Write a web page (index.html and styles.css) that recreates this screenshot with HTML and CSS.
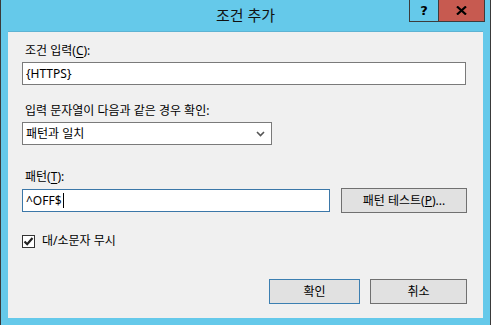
FILE: index.html
```html
<!DOCTYPE html>
<html lang="ko">
<head>
    <meta charset="UTF-8">
    <meta name="viewport" content="width=device-width, initial-scale=1.0">
    <title>조건 추가</title>
    <link rel="stylesheet" href="styles.css">
</head>
<body>
    <div class="window">
        <div class="titlebar">
            <div></div>
            <div class="title">조건 추가</div>
            <div class="caption">
                <div class="cap-btn help">?</div>
                <div class="cap-btn close">
                    <svg width="11" height="9" viewBox="0 0 11 9">
                        <path d="M1 0.5 L10 8.5 M10 0.5 L1 8.5" stroke="#000" stroke-width="2.2" fill="none"/>
                    </svg>
                </div>
            </div>
        </div>
        <div class="content">
            <div class="label label-first">조건 입력(<u>C</u>):</div>
            <div class="field field-wide">{HTTPS}</div>

            <div class="label label-second">입력 문자열이 다음과 같은 경우 확인:</div>
            <div class="field field-select">
                <span>패턴과 일치</span>
                <svg width="9" height="6" viewBox="0 0 9 6">
                    <path d="M1 1 L4.5 4.5 L8 1" stroke="#555" stroke-width="1.6" fill="none"/>
                </svg>
            </div>

            <div class="label label-third">패턴(<u>T</u>):</div>
            <div class="pattern-row">
                <div class="field field-pattern focus">^OFF$<span class="caret"></span></div>
                <div class="btn btn-test">패턴 테스트(<u>P</u>)...</div>
            </div>

            <div class="check-row">
                <div class="checkbox">
                    <svg width="11" height="11" viewBox="0 0 11 11">
                        <path d="M1.5 5.5 L4.2 8.2 L9.5 2" stroke="#222" stroke-width="2.2" fill="none"/>
                    </svg>
                </div>
                <span>대/소문자 무시</span>
            </div>

            <div class="actions">
                <div class="btn btn-ok">확인</div>
                <div class="btn btn-cancel">취소</div>
            </div>
        </div>
    </div>
</body>
</html>
```

FILE: styles.css
```css
* {
    margin: 0;
    padding: 0;
    box-sizing: border-box;
}
body {
    width: 491px;
    height: 325px;
    font-family: "Noto Sans", "Noto Sans CJK KR", sans-serif;
    font-size: 12px;
    line-height: 16px;
    color: #000;
}
.window {
    width: 491px;
    height: 325px;
    background-color: #65c9ea;
    border-left: 1px solid #3a3a3a;
    border-right: 1px solid #3a3a3a;
    display: flex;
    flex-direction: column;
}
.titlebar {
    height: 31px;
    display: grid;
    grid-template-columns: 1fr auto 1fr;
}
.title {
    font-size: 15px;
    line-height: 20px;
    padding-top: 5px;
    color: #111;
}
.caption {
    display: flex;
    justify-content: flex-end;
    align-items: flex-start;
    padding-right: 5px;
}
.cap-btn {
    height: 22px;
    border: 1px solid #3c3c3c;
    display: flex;
    justify-content: center;
    align-items: center;
    font-family: "DejaVu Sans", sans-serif;
    font-weight: bold;
    font-size: 13px;
}
.help {
    width: 29px;
    border-top: none;
    border-right: none;
}
.close {
    width: 47px;
    border-top: none;
    background-color: #c75a50;
}
.content {
    flex: 1;
    margin: 0 7px 7px 7px;
    background-color: #f0f0f0;
    border-top: 1px solid #5eb3d3;
    padding: 0 16px 0 14px;
    display: flex;
    flex-direction: column;
}
.label {
    padding-left: 3px;
    margin-bottom: 3px;
}
.label u {
    text-underline-offset: 2px;
}
.label-first {
    margin-top: 11px;
}
.label-second {
    margin-top: 18px;
}
.label-third {
    margin-top: 24px;
}
.field {
    height: 23px;
    background-color: #fff;
    border: 1px solid #7a7a7a;
    padding: 2px 3px;
    display: flex;
    align-items: center;
}
.field-wide {
    width: 444px;
}
.field-select {
    width: 250px;
    justify-content: space-between;
    padding-right: 6px;
}
.pattern-row {
    display: flex;
    align-items: center;
    gap: 11px;
}
.field-pattern {
    width: 308px;
}
.focus {
    border-color: #3b77a8;
}
.caret {
    width: 1px;
    height: 15px;
    background-color: #000;
    margin-left: 1px;
}
.btn {
    height: 25px;
    background-color: #e1e1e1;
    border: 1px solid #707070;
    display: flex;
    justify-content: center;
    align-items: center;
}
.btn-test {
    width: 126px;
}
.check-row {
    margin-top: 20px;
    display: flex;
    align-items: center;
    gap: 7px;
}
.checkbox {
    width: 13px;
    height: 13px;
    background-color: #fff;
    border: 1px solid #333;
    display: flex;
    justify-content: center;
    align-items: center;
}
.actions {
    margin-top: 30px;
    display: flex;
    justify-content: flex-end;
    gap: 10px;
}
.btn-ok {
    width: 91px;
    border-color: #3c7fb1;
}
.btn-cancel {
    width: 97px;
}
```
